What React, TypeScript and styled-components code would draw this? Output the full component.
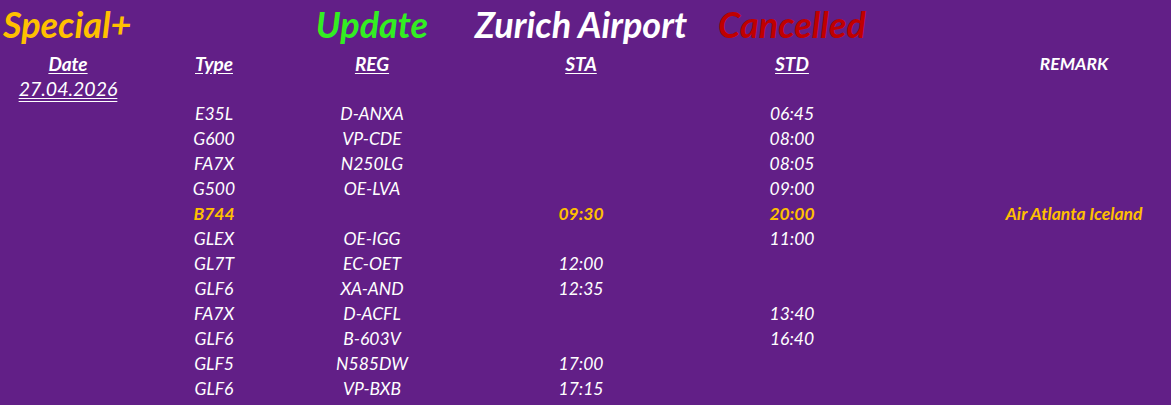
import styled, { createGlobalStyle } from "styled-components";

type Flight = {
  type: string;
  reg: string;
  sta: string;
  std: string;
  remark?: string;
  special?: boolean;
};

const flights: Flight[] = [
  { type: "E35L", reg: "D-ANXA", sta: "", std: "06:45" },
  { type: "G600", reg: "VP-CDE", sta: "", std: "08:00" },
  { type: "FA7X", reg: "N250LG", sta: "", std: "08:05" },
  { type: "G500", reg: "OE-LVA", sta: "", std: "09:00" },
  {
    type: "B744",
    reg: "",
    sta: "09:30",
    std: "20:00",
    remark: "Air Atlanta Iceland",
    special: true,
  },
  { type: "GLEX", reg: "OE-IGG", sta: "", std: "11:00" },
  { type: "GL7T", reg: "EC-OET", sta: "12:00", std: "" },
  { type: "GLF6", reg: "XA-AND", sta: "12:35", std: "" },
  { type: "FA7X", reg: "D-ACFL", sta: "", std: "13:40" },
  { type: "GLF6", reg: "B-603V", sta: "", std: "16:40" },
  { type: "GLF5", reg: "N585DW", sta: "17:00", std: "" },
  { type: "GLF6", reg: "VP-BXB", sta: "17:15", std: "" },
];

const GlobalStyle = createGlobalStyle`
  *, *::before, *::after {
    box-sizing: border-box;
  }
  html, body {
    margin: 0;
    padding: 0;
    background: #621f87;
  }
  body {
    font-family: Lato, "Liberation Sans", sans-serif;
    font-style: italic;
    color: #ffffff;
  }
`;

export default function App() {
  return (
    <>
      <GlobalStyle />
      <Board>
        <TitleRow>
          <Title color="#ffc000" align="left">
            Special+
          </Title>
          <span />
          <Title color="#33ee22">Update</Title>
          <Title color="#ffffff">Zurich Airport</Title>
          <Title color="#c00000">Cancelled</Title>
        </TitleRow>

        <Row>
          <Head>Date</Head>
          <Head>Type</Head>
          <Head>REG</Head>
          <Head>STA</Head>
          <Head>STD</Head>
          <Remark>
            <strong>REMARK</strong>
          </Remark>
        </Row>

        <Row>
          <DateCell>27.04.2026</DateCell>
        </Row>

        {flights.map((f, i) => (
          <Row key={i} $special={f.special}>
            <Cell />
            <Cell>{f.type}</Cell>
            <Cell>{f.reg}</Cell>
            <Cell>{f.sta}</Cell>
            <Cell>{f.std}</Cell>
            <Remark>{f.remark}</Remark>
          </Row>
        ))}
      </Board>
    </>
  );
}

const Board = styled.div`
  width: 1171px;
  height: 405px;
  overflow: hidden;
  background: #621f87;
`;

const columns = "136px 156px 160px 258px 164px 1fr";

const TitleRow = styled.div`
  display: grid;
  grid-template-columns: ${columns};
  height: 50px;
  align-items: center;
`;

const Title = styled.div<{ color: string; align?: string }>`
  color: ${(p) => p.color};
  text-align: ${(p) => p.align || "center"};
  padding-left: ${(p) => (p.align === "left" ? "3px" : "0")};
  font-size: 36px;
  font-weight: 700;
  white-space: nowrap;
  line-height: 1;
  padding-bottom: 2px;
`;

const Row = styled.div<{ $special?: boolean }>`
  display: grid;
  grid-template-columns: ${columns};
  height: 25px;
  align-items: center;
  font-size: 17.5px;
  line-height: 1;
  padding-top: 2px;
  color: ${(p) => (p.$special ? "#ffc000" : "#ffffff")};
  font-weight: ${(p) => (p.$special ? 700 : 400)};
`;

const Cell = styled.div`
  text-align: center;
  white-space: nowrap;
`;

const Head = styled(Cell)`
  font-size: 19px;
  font-weight: 700;
  text-decoration: underline;
  text-underline-offset: 2px;
`;

const DateCell = styled(Cell)`
  font-size: 19.5px;
  text-decoration: underline double;
  text-underline-offset: 2px;
`;

const Remark = styled(Cell)`
  padding-left: 103px;

  strong {
    font-weight: 700;
  }
`;
